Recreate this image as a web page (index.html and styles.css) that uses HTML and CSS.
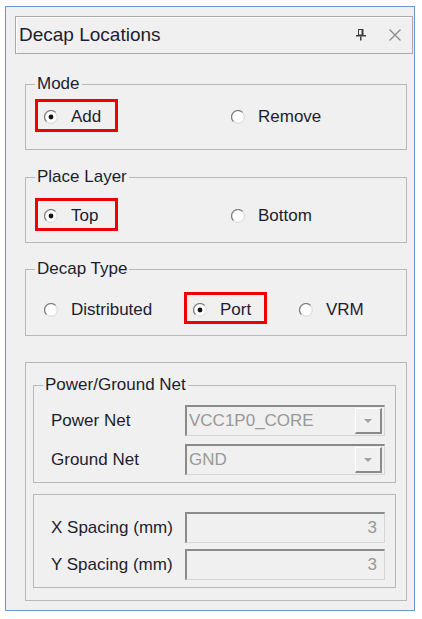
FILE: index.html
```html
<html lang="en">
<head>
  <meta charset="UTF-8">
  <title>Decap Locations</title>
  <link rel="stylesheet" href="styles.css">
</head>
<body>

<svg class="defs" width="0" height="0">
  <symbol id="radio" viewBox="0 0 14 14">
    <circle cx="7" cy="7" r="6.3" fill="#fff" stroke="#d4d4d4"/>
    <path d="M2.4 11.6A6.3 6.3 0 0 1 11.6 2.4" fill="none" stroke="#7c7c7c" stroke-width="1.2"/>
  </symbol>
  <symbol id="radio-on" viewBox="0 0 14 14">
    <circle cx="7" cy="7" r="6.3" fill="#fff" stroke="#d4d4d4"/>
    <path d="M2.4 11.6A6.3 6.3 0 0 1 11.6 2.4" fill="none" stroke="#7c7c7c" stroke-width="1.2"/>
    <circle cx="7" cy="7" r="2.4" fill="#111"/>
  </symbol>
</svg>

<div class="panel">
  <div class="titlebar">
    <span class="title">Decap Locations</span>
    <svg class="pin" width="10" height="12" viewBox="0 0 10 12">
      <rect x="2.5" y="0.5" width="4" height="5.5" fill="none" stroke="#3c3c3c"/>
      <rect x="5.5" y="0" width="2" height="6.5" fill="#3c3c3c"/>
      <rect x="0" y="6" width="10" height="1.5" fill="#3c3c3c"/>
      <rect x="4" y="7.5" width="1.5" height="4" fill="#3c3c3c"/>
    </svg>
    <svg class="close" width="12" height="12" viewBox="0 0 12 12">
      <path d="M0.5 0.5L11.5 11.5M11.5 0.5L0.5 11.5" stroke="#8a8a8a" stroke-width="1.3"/>
    </svg>
  </div>

  <fieldset class="group mode">
    <legend>Mode</legend>
    <div class="options two">
      <label class="opt marked"><svg class="radio"><use href="#radio-on"/></svg>Add</label>
      <label class="opt"><svg class="radio"><use href="#radio"/></svg>Remove</label>
    </div>
  </fieldset>

  <fieldset class="group layer">
    <legend>Place Layer</legend>
    <div class="options two">
      <label class="opt marked"><svg class="radio"><use href="#radio-on"/></svg>Top</label>
      <label class="opt"><svg class="radio"><use href="#radio"/></svg>Bottom</label>
    </div>
  </fieldset>

  <fieldset class="group type">
    <legend>Decap Type</legend>
    <div class="options three">
      <label class="opt"><svg class="radio"><use href="#radio"/></svg>Distributed</label>
      <label class="opt marked"><svg class="radio"><use href="#radio-on"/></svg>Port</label>
      <label class="opt"><svg class="radio"><use href="#radio"/></svg>VRM</label>
    </div>
  </fieldset>

  <div class="nets">
    <fieldset class="group inner pg">
      <legend>Power/Ground Net</legend>
      <div class="rows">
        <span class="lbl">Power Net</span>
        <div class="combo"><span>VCC1P0_CORE</span><span class="drop"></span></div>
        <span class="lbl">Ground Net</span>
        <div class="combo"><span>GND</span><span class="drop"></span></div>
      </div>
    </fieldset>

    <div class="inner spacing">
      <div class="rows">
        <span class="lbl">X Spacing (mm)</span>
        <div class="field">3</div>
        <span class="lbl">Y Spacing (mm)</span>
        <div class="field">3</div>
      </div>
    </div>
  </div>
</div>

</body>
</html>
```

FILE: styles.css
```css
body {
  margin: 0;
  background: #fff;
  font-family: "Liberation Sans", Arial, sans-serif;
  font-size: 17px;
  color: #1d1d2f;
}

.defs {
  position: absolute;
}

.panel {
  margin: 6px 0 0 5px;
  width: 410px;
  height: 605px;
  box-sizing: border-box;
  border: 1px solid #7096d2;
  background: #f0f0f0;
  padding-top: 9px;
}

.titlebar {
  margin-left: 9px;
  width: 398px;
  height: 38px;
  box-sizing: border-box;
  border: 1px solid #a9a9a9;
  box-shadow: inset 1px 1px 0 #fff;
  display: flex;
  align-items: center;
  padding: 0 11px 0 3px;
}

.title {
  font-size: 19px;
  flex: 1;
}

.pin {
  margin-right: 23px;
}

/* group boxes */
.group {
  margin: 0 0 0 19px;
  width: 382px;
  box-sizing: border-box;
  border: 1px solid #b8b8b8;
  padding: 0 0 0 9px;
  min-width: 0;
}

.group legend {
  padding: 0 2px;
  line-height: 20px;
}

.mode {
  margin-top: 20px;
  padding-top: 5px;
  padding-bottom: 17px;
}

.layer {
  margin-top: 17px;
  padding-top: 11px;
  padding-bottom: 11px;
}

.type {
  margin-top: 16px;
  padding-top: 13px;
  padding-bottom: 11px;
}

.options {
  display: grid;
}

.options.two {
  grid-template-columns: 187px auto;
}

.options.three {
  grid-template-columns: 149px 106px auto;
}

.opt {
  display: flex;
  align-items: center;
  height: 33px;
  box-sizing: border-box;
  border: 3px solid transparent;
  padding: 3px 0 0 6px;
  justify-self: start;
}

.type .opt {
  height: 32px;
}

.opt.marked {
  border-color: #ee0000;
  width: 83px;
}

.radio {
  width: 14px;
  height: 14px;
  margin-right: 13px;
  flex: none;
}

/* nets area */
.nets {
  margin: 26px 0 0 19px;
  width: 382px;
  height: 239px;
  box-sizing: border-box;
  border: 1px solid #b8b8b8;
  padding: 12px 0 0 7px;
}

.inner {
  margin: 0;
  width: 363px;
  box-sizing: border-box;
  border: 1px solid #b8b8b8;
}

.pg {
  padding: 0 0 7px 9px;
}

.pg .rows {
  padding-top: 10px;
  row-gap: 8px;
}

.spacing {
  margin-top: 11px;
  height: 94px;
  padding: 17px 0 0 9px;
}

.spacing .rows {
  row-gap: 6px;
}

.rows {
  display: grid;
  grid-template-columns: 142px 200px;
  align-items: center;
}

.lbl {
  padding-left: 8px;
}

.combo,
.field {
  height: 31px;
  box-sizing: border-box;
  border-top: 2px solid #8a8a8a;
  border-left: 2px solid #8a8a8a;
  border-right: 1px solid #d6d6d6;
  border-bottom: 1px solid #d6d6d6;
  color: #989898;
  display: flex;
  align-items: center;
}

.combo {
  padding: 0 2px 0 2px;
}

.combo span:first-child {
  flex: 1;
}

.drop {
  width: 27px;
  height: 26px;
  box-sizing: border-box;
  border-right: 2px solid #8a8a8a;
  border-bottom: 2px solid #8a8a8a;
  border-top: 1px solid #fff;
  border-left: 1px solid #fff;
  display: flex;
  align-items: center;
  justify-content: center;
}

.drop::after {
  content: "";
  border-left: 4px solid transparent;
  border-right: 4px solid transparent;
  border-top: 4px solid #a0a0a0;
}

.field {
  justify-content: flex-end;
  padding-right: 7px;
}
```
